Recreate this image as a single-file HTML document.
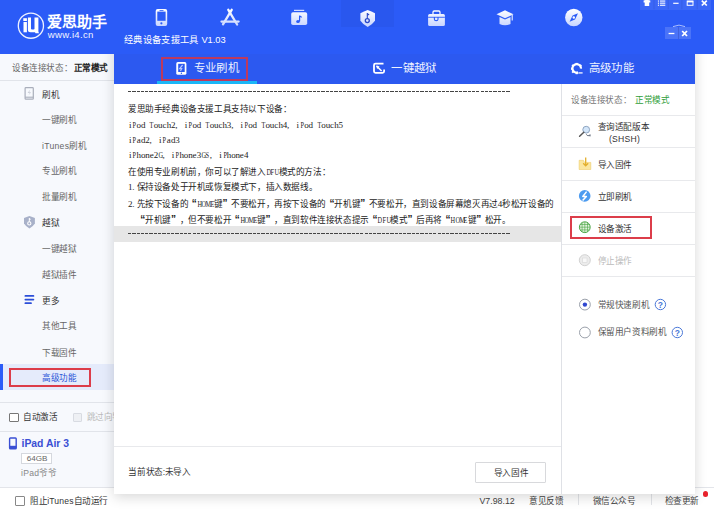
<!DOCTYPE html>
<html lang="zh-CN"><head><meta charset="utf-8">
<style>
*{margin:0;padding:0;box-sizing:border-box}
html,body{width:714px;height:510px;overflow:hidden;background:#fff}
body{position:relative;font-family:"Liberation Sans",sans-serif;color:#333}
.a{position:absolute}
.t{position:absolute;white-space:nowrap;line-height:1}
#hdr{left:0;top:0;width:714px;height:54px;background:#2b5bf7}
#side{left:0;top:54px;width:114px;height:433px;background:#f7f9fd}
#foot{left:0;top:487px;width:714px;height:23px;background:#fff;border-top:1px solid #e3e5ea}
#dlg{left:114px;top:27px;width:581px;height:467px;background:#fff;box-shadow:0 3px 12px rgba(0,0,0,.16);clip-path:inset(27px -20px -20px -20px)}
#dhdr{left:0;top:0;width:581px;height:57px;background:#2c59f0}
.si{font-size:8.6px;color:#666;letter-spacing:-.4px}
.rp{font-size:8.6px;color:#333;letter-spacing:-.4px}
.txt{font-family:"Liberation Mono",monospace;font-size:8.6px;letter-spacing:-.4px;color:#222}
.txt i{font-style:normal;display:inline-block;width:4.3px;text-align:center;letter-spacing:0;font-family:"Liberation Serif",serif;font-size:9px}
.txt i.p{text-align:left}
.txt i.u{font-size:8.8px;transform:scaleX(.72)}
.ql,.qr{font-size:10px;font-weight:bold;font-family:"Liberation Sans",sans-serif}
.ql{display:inline-block;width:8.6px;text-align:right;letter-spacing:0}
.qr{display:inline-block;width:8.6px;text-align:left;letter-spacing:0}
.dv{position:absolute;height:1px;background:#e8e9ec}
</style></head><body>
<div id="hdr" class="a">
  <svg class="a" style="left:0;top:0" width="50" height="45" viewBox="0 0 50 45">
    <circle cx="30.9" cy="25.65" r="12.6" fill="none" stroke="#eef2ff" stroke-width="1.3"/>
    <rect x="23.3" y="18.2" width="3.6" height="2.8" fill="#fff"/>
    <rect x="23.5" y="22" width="3.4" height="10.3" fill="#fff"/>
    <path d="M27.9 17.6 H31 V28.8 Q31 29.6 32 29.6 H33.6 Q34.5 29.6 34.5 28.8 V17.6 H38.4 V31.5 L39 33.3 H35.5 L35 32.3 H30.5 Q27.9 32.3 27.9 29.8 Z" fill="#fff"/>
  </svg>
  <div class="t" style="left:47px;top:14px;font-size:15px;font-weight:bold;color:#fff">爱思助手</div>
  <div class="t" style="left:47.8px;top:29.6px;font-size:9.6px;letter-spacing:.3px;color:#f2f5ff">www.i4.cn</div>
  <div class="a" style="left:341px;top:0;width:53px;height:27px;background:rgba(0,0,40,.045)"></div>
  <svg class="a" style="left:0;top:0" width="714" height="30" viewBox="0 0 714 30">
    <defs>
      <linearGradient id="ig" gradientUnits="userSpaceOnUse" x1="0" y1="9" x2="0" y2="26">
        <stop offset="0" stop-color="#fff"/><stop offset="1" stop-color="#c9d6ff"/>
      </linearGradient>
    </defs>
    <!-- phone -->
    <rect x="155.7" y="8.9" width="11.5" height="17.2" rx="2" fill="url(#ig)"/>
    <rect x="157.3" y="11.6" width="8.3" height="9.2" fill="#2b5cf8"/>
    <rect x="159.5" y="10" width="4" height="0.8" fill="#2b5cf8"/>
    <circle cx="161.4" cy="23.3" r="1.1" fill="#2b5cf8"/>
    <!-- app store A -->
    <g stroke="url(#ig)" stroke-width="2.3" stroke-linecap="round" fill="none">
      <path d="M228.3 9.8 L237.1 24.5"/>
      <path d="M231.7 9.8 L223 24.3"/>
      <path d="M221.5 21.6 H238.6"/>
    </g>
    <!-- music box -->
    <rect x="294" y="9.8" width="10.2" height="1.1" fill="#e6ecff"/>
    <rect x="291.2" y="12.2" width="16" height="12.8" rx="1.8" fill="url(#ig)"/>
    <path d="M299.6 15.8 V21.2" stroke="#2b5cf8" stroke-width="1.2"/>
    <path d="M299.4 15.6 Q301.5 15.8 302.2 17.6 L301 17.4 Q300.4 16.9 299.6 17" fill="#2b5cf8"/>
    <ellipse cx="298" cy="21.4" rx="1.8" ry="1.5" fill="#2b5cf8"/>
    <!-- shield key -->
    <path d="M367.7 10 Q371.5 11.2 375 13.2 V20.8 Q372 25 367.7 27 Q363.4 25 360.4 20.8 V13.2 Q364 11.2 367.7 10 Z" fill="url(#ig)"/>
    <circle cx="367.3" cy="20.6" r="2" fill="none" stroke="#2a48c8" stroke-width="1.3"/>
    <path d="M367.3 18.6 V13" stroke="#2a48c8" stroke-width="1.1"/>
    <path d="M367.3 13 L369.6 14.6 L367.3 16 Z" fill="#2a48c8"/>
    <!-- toolbox -->
    <path d="M433 14 V12.2 Q433 11 434.2 11 H438.8 Q440 11 440 12.2 V14" stroke="url(#ig)" stroke-width="1.3" fill="none"/>
    <rect x="428.1" y="14" width="16.8" height="12" rx="1.5" fill="url(#ig)"/>
    <rect x="428.1" y="16.8" width="16.8" height="0.9" fill="#2b5cf8"/>
    <path d="M434.4 17 V19.2 Q434.4 20.6 436.2 20.6 Q438 20.6 438 19.2 V17" stroke="#2b5cf8" stroke-width="1.1" fill="none"/>
    <!-- grad cap -->
    <path d="M505 10.3 L513.5 14.3 L505 18.3 L496.5 14.3 Z" fill="url(#ig)"/>
    <path d="M499.5 17 V24 Q505 26.5 510.5 24 V17 L505 19.6 Z" fill="url(#ig)"/>
    <path d="M512.2 15 V20.5" stroke="#e8eeff" stroke-width="1.1"/>
    <!-- compass -->
    <circle cx="573.8" cy="17.5" r="8.7" fill="url(#ig)"/>
    <path d="M578 13.3 L575 19.5 L569.6 21.7 L572.6 15.5 Z" fill="#2b5cf8"/>
    <circle cx="573.8" cy="17.5" r="1.2" fill="#fff"/>
  </svg>
  <!-- window buttons -->
  <div class="a" style="left:640.4px;top:0;width:71px;height:10px;background:rgba(255,255,255,.08)"></div>
  <svg class="a" style="left:636px;top:0" width="78" height="12" viewBox="636 0 78 12">
    <g stroke="rgba(0,0,60,.12)" stroke-width=".8"><path d="M654 0V9.3M668.2 0V9.3M681.9 0V9.3M697.2 0V9.3"/></g>
    <path d="M643.6 0.5 L645.6 0 H648.2 L650.3 0.5 V2.6 H649.2 V6 H644.7 V2.6 H643.6 Z" fill="#fff"/>
    <g fill="#fff"><rect x="657.9" y="0.5" width="1.1" height="1.1"/><rect x="657.9" y="2.6" width="1.1" height="1.1"/><rect x="657.9" y="4.7" width="1.1" height="1.1"/>
    <rect x="659.9" y="0.5" width="5.4" height="1.1"/><rect x="659.9" y="2.6" width="5.4" height="1.1"/><rect x="659.9" y="4.7" width="5.4" height="1.1"/></g>
    <path d="M673.2 3.3 H678.6" stroke="#fff" stroke-width="1.2"/>
    <rect x="687.2" y="1.1" width="5.8" height="4.2" fill="none" stroke="#fff" stroke-width="1"/>
    <path d="M687 1.6 H693.2" stroke="#fff" stroke-width="1.6"/>
    <path d="M701.8 0.6 L706.8 5.5 M706.8 0.6 L701.8 5.5" stroke="#fff" stroke-width="1.7"/>
  </svg>
</div>
<div id="side" class="a">
  <div class="t si" style="left:12px;top:9.7px;color:#666">设备连接状态：</div>
  <div class="t si" style="left:73.5px;top:9.7px;color:#222;font-weight:bold">正常模式</div>
</div>
<div class="dv" style="left:0;top:80px;width:114px;background:#e1e4ea"></div>
<svg class="a" style="left:0;top:80px" width="114" height="330" viewBox="0 80 114 330">
  <rect x="25.1" y="87.6" width="8.2" height="11.6" rx=".8" fill="none" stroke="#a9aebb" stroke-width="1.2"/>
  <path d="M25.1 97.2 H33.3" stroke="#a9aebb" stroke-width="1.1"/>
  <path d="M30.2 89.6 L27.6 93.1 H29.7 L28.4 95.4 L31.1 92.2 H29.2 Z" fill="#c9cdd7"/>
  <path d="M29.45 215.9 Q32.3 216.7 34.9 218.1 V223.6 Q32.7 227 29.45 228.5 Q26.2 227 24 223.6 V218.1 Q26.6 216.7 29.45 215.9 Z" fill="#a8b1c9"/>
  <circle cx="29.3" cy="223.4" r="1.6" fill="none" stroke="#fff" stroke-width="1.1"/>
  <path d="M29.3 221.8 V218" stroke="#fff" stroke-width="1"/>
  <path d="M29.3 218 L31 219.2 L29.3 220.2 Z" fill="#fff"/>
  <g stroke="#2b4ed8" stroke-width="1.8" stroke-linecap="round">
    <path d="M25.4 295.9 H33.4"/><path d="M25.4 299.6 H33.4"/><path d="M25.4 303.2 H31"/>
  </g>
</svg>
<div class="t si" style="left:42px;top:90.5px;color:#333">刷机</div>
<div class="t si" style="left:42px;top:116.4px">一键刷机</div>
<div class="t si" style="left:42px;top:142.0px"><span style="letter-spacing:.3px">iTunes</span>刷机</div>
<div class="t si" style="left:42px;top:167.0px">专业刷机</div>
<div class="t si" style="left:42px;top:192.6px">批量刷机</div>
<div class="t si" style="left:42px;top:219.4px;color:#333">越狱</div>
<div class="t si" style="left:42px;top:245.4px">一键越狱</div>
<div class="t si" style="left:42px;top:271.1px">越狱插件</div>
<div class="t si" style="left:42px;top:296.7px;color:#333">更多</div>
<div class="t si" style="left:42px;top:322.4px">其他工具</div>
<div class="t si" style="left:42px;top:348.7px">下载固件</div>
<div class="a" style="left:0;top:364px;width:114px;height:26px;background:#e5ebfb"></div>
<div class="a" style="left:0;top:364px;width:3px;height:26px;background:#2b5cf8"></div>
<div class="t si" style="left:42px;top:374.1px;color:#2b55d8">高级功能</div>
<div class="a" style="left:9px;top:367.6px;width:82px;height:19.4px;border:2.2px solid #dc3d4a"></div>
<div class="dv" style="left:0;top:401.5px;width:114px;background:#e1e4ea"></div>
<div class="a" style="left:9.3px;top:412.7px;width:9.6px;height:9.4px;border:1px solid #777;background:#fff;border-radius:1px"></div>
<div class="t si" style="left:23.3px;top:412.9px;color:#333">自动激活</div>
<div class="a" style="left:72.7px;top:412.7px;width:9.6px;height:9.4px;border:1px solid #d8dbe2;background:#eef0f4;border-radius:1px"></div>
<div class="t si" style="left:86.7px;top:412.9px;color:#bbb">跳过向导</div>
<div class="dv" style="left:0;top:430.5px;width:114px;background:#e1e4ea"></div>
<svg class="a" style="left:8px;top:436px" width="10" height="14" viewBox="0 0 10 14">
  <rect x="1.6" y="2" width="6.6" height="10.8" rx=".8" fill="none" stroke="#3a4fd4" stroke-width="1.4"/>
  <rect x="1.2" y="9.8" width="7.4" height="2.4" fill="#3a4fd4"/>
</svg>
<div class="t" style="left:21.5px;top:439.2px;font-size:10.4px;font-weight:bold;color:#3a4fd4">iPad Air 3</div>
<div class="a" style="left:21.1px;top:452.8px;width:31.3px;height:10.8px;border:1px solid #d5d8de;background:#fff"></div>
<div class="t" style="left:26.8px;top:454.6px;font-size:8.1px;color:#666">64GB</div>
<div class="t si" style="left:21px;top:469px;color:#888"><span style="letter-spacing:.3px">iPad</span>爷爷</div>
<div id="foot" class="a"></div>
<div class="a" style="left:15.3px;top:495.5px;width:9.6px;height:10px;border:1px solid #888;background:#fff;border-radius:1px"></div>
<div class="t si" style="left:30px;top:497.2px;color:#333">阻止<span style="letter-spacing:.15px">iTunes</span>自动运行</div>
<div class="t" style="left:479.5px;top:497px;font-size:8.8px;color:#444">V7.98.12</div>
<div class="t si" style="left:529px;top:497.2px;color:#444">意见反馈</div>
<div class="a" style="left:577.5px;top:494.3px;width:1px;height:10.5px;background:#e2e4e8"></div>
<div class="t si" style="left:592.7px;top:497.2px;color:#444">微信公众号</div>
<div class="a" style="left:650.8px;top:494.3px;width:1px;height:10.5px;background:#e2e4e8"></div>
<div class="t si" style="left:664.5px;top:497.2px;color:#444">检查更新</div>
<div class="a" style="left:702.6px;top:491.2px;width:5.6px;height:5.6px;border-radius:50%;background:#e8222c"></div>
<div id="dlg" class="a">
  <div id="dhdr" class="a"></div>
</div>
<div class="t" style="left:124px;top:35.5px;font-size:9.3px;letter-spacing:.35px;color:#fff">经典设备支援工具<span style="letter-spacing:0"> V1.03</span></div>
<div class="a" style="left:665px;top:27.3px;width:26px;height:12.2px;background:rgba(255,255,255,.15)"></div>
<div class="a" style="left:678px;top:27.3px;width:.8px;height:12.2px;background:rgba(0,0,60,.15)"></div>
<svg class="a" style="left:660px;top:22px" width="36" height="20" viewBox="660 22 36 20">
  <path d="M673 26.6 Q679 23.6 685 26.6" stroke="rgba(255,255,255,.6)" stroke-width="1" fill="none"/>
  <path d="M668.6 33.5 H674.4" stroke="#fff" stroke-width="1.3"/>
  <path d="M682.2 31 L687 36 M687 31 L682.2 36" stroke="#fff" stroke-width="1.8"/>
</svg>
<!-- tabs -->
<div class="a" style="left:156.7px;top:81px;width:100.3px;height:3px;background:#1ab6f7"></div>
<div class="a" style="left:160.6px;top:57.4px;width:87.8px;height:23.4px;border:2px solid #bd3a5e"></div>
<svg class="a" style="left:170px;top:58px" width="420" height="22" viewBox="170 58 420 22">
  <rect x="176.25" y="62.1" width="10.15" height="12.7" rx="1.6" fill="#fff"/>
  <rect x="178.2" y="63.8" width="6.5" height="8.2" fill="#2c59f0"/>
  <path d="M182.6 65 L179.7 68.6 H181.7 L180.5 71" stroke="#b9c8ff" stroke-width="1.2" fill="none"/>
  <circle cx="181.4" cy="73.3" r=".7" fill="#2c59f0"/>
  <path d="M383.5 63.6 H375.5 Q374 63.6 374 65.1 V71.3 Q374 72.8 375.5 72.8 H382.6 Q384.1 72.8 384.1 71.3 V69.6" stroke="#fff" stroke-width="1.8" fill="none"/>
  <path d="M376.6 66 L381.6 71" stroke="#fff" stroke-width="1.5"/>
  <path d="M376.2 65.6 L379.6 66.5 L377.1 69 Z" fill="#fff"/>
  <path d="M578.2 72.4 A4.3 4.3 0 1 1 581 68.6" stroke="#fff" stroke-width="2.2" fill="none"/>
  <g fill="#fff">
    <rect x="575.6" y="62.9" width="2.2" height="1.6"/>
    <rect x="579.8" y="64.6" width="1.8" height="1.8" transform="rotate(45 580.7 65.5)"/>
    <rect x="571.1" y="67.6" width="1.6" height="2.2"/>
    <rect x="571.9" y="64.6" width="1.8" height="1.8" transform="rotate(45 572.8 65.5)"/>
    <rect x="571.9" y="71" width="1.8" height="1.8" transform="rotate(45 572.8 71.9)"/>
    <rect x="575.6" y="72.6" width="2.2" height="1.6"/>
  </g>
  <path d="M578.6 72.9 H582.6" stroke="#dfe6ff" stroke-width="1.5"/>
</svg>
<div class="t" style="left:194px;top:63.2px;font-size:11.4px;letter-spacing:.17px;color:#eef2ff">专业刷机</div>
<div class="t" style="left:391.4px;top:63.2px;font-size:11.4px;letter-spacing:.17px;color:#eef2ff">一键越狱</div>
<div class="t" style="left:589px;top:63.2px;font-size:11.4px;letter-spacing:.17px;color:#eef2ff">高级功能</div>
<!-- right panel -->
<div class="a" style="left:561px;top:84px;width:1px;height:410px;background:#dfe1e6"></div>
<div class="t rp" style="left:571px;top:96.3px;color:#777">设备连接状态：</div>
<div class="t rp" style="left:635px;top:96.3px;color:#2f9e3a">正常模式</div>
<div class="dv" style="left:562px;top:115px;width:133px"></div>
<div class="t rp" style="left:597.6px;top:122.8px">查询适配版本</div>
<div class="t rp" style="left:609px;top:134.5px;letter-spacing:.25px">(SHSH)</div>
<div class="dv" style="left:562px;top:147px;width:133px"></div>
<div class="t rp" style="left:597.6px;top:160.5px">导入固件</div>
<div class="dv" style="left:562px;top:180px;width:133px"></div>
<div class="t rp" style="left:597.6px;top:193.3px">立即刷机</div>
<div class="dv" style="left:562px;top:212px;width:133px"></div>
<div class="t rp" style="left:597.6px;top:225px">设备激活</div>
<div class="a" style="left:570.2px;top:215.8px;width:81.4px;height:23.3px;border:2px solid #dc3d4a"></div>
<div class="dv" style="left:562px;top:244px;width:133px"></div>
<div class="t rp" style="left:597.6px;top:257.1px;color:#bbb">停止操作</div>
<div class="dv" style="left:562px;top:276px;width:133px"></div>
<div class="t rp" style="left:597.6px;top:300.5px;color:#555">常规快速刷机</div>
<div class="t rp" style="left:597.6px;top:328.3px;color:#555">保留用户资料刷机</div>
<svg class="a" style="left:570px;top:118px" width="120" height="225" viewBox="570 118 120 225">
  <circle cx="586.2" cy="129.7" r="3.4" fill="#d3e6fa" stroke="#8fa5c0" stroke-width="1"/>
  <path d="M583.8 132.3 L579.6 136.2" stroke="#555" stroke-width="1.5" stroke-linecap="round"/>
  <path d="M586.2 134.2 L588 136.2 M587.5 135.5 H590.3 M590 134.2 V136.5" stroke="#6b7483" stroke-width=".9" fill="none"/>
  <path d="M579.1 160.3 H583.4 L584.6 162.4 H590.8 V169.5 H579.1 Z" fill="#fbe6a0" stroke="#ecc65c" stroke-width=".5"/>
  <path d="M585.7 157.5 V165.6 M583.2 163.3 L585.7 165.8 L588.2 163.3" stroke="#e3ae2c" stroke-width="1.3" fill="none"/>
  <circle cx="584.7" cy="195.9" r="5.8" fill="#4d9cf0"/>
  <path d="M586.6 191.6 L582.8 196.5 H586.4 L582.6 200.4" stroke="#fff" stroke-width="1.5" fill="none" stroke-linejoin="round"/>
  <circle cx="584.8" cy="227.2" r="5.4" fill="#e2f3dc" stroke="#4aa544" stroke-width="1"/>
  <path d="M579.6 227.2 H590 M584.8 222 V232.4 M580.4 224.5 H589.2 M580.4 229.9 H589.2 M582.1 222.6 V231.8 M587.5 222.6 V231.8" stroke="#4aa544" stroke-width=".6"/>
  <circle cx="584.8" cy="260.2" r="5.5" fill="#ececec" stroke="#d2d2d2" stroke-width="1"/>
  <rect x="582.6" y="258" width="4.4" height="4.4" fill="#f8f8f8" stroke="#d8d8d8" stroke-width=".6"/>
  <circle cx="584.9" cy="304.6" r="5.4" fill="#fff" stroke="#9aa0aa" stroke-width="1"/>
  <circle cx="584.9" cy="304.6" r="2.2" fill="#3048d0"/>
  <circle cx="584.9" cy="332.5" r="5.4" fill="#fff" stroke="#9aa0aa" stroke-width="1"/>
  <circle cx="660.4" cy="304.5" r="5.2" fill="#fff" stroke="#4a78d8" stroke-width="1"/>
  <text x="660.4" y="307.8" text-anchor="middle" font-family="Liberation Sans" font-size="8.5" font-weight="bold" fill="#4a78d8">?</text>
  <circle cx="677.3" cy="332.5" r="5.2" fill="#fff" stroke="#4a78d8" stroke-width="1"/>
  <text x="677.3" y="335.8" text-anchor="middle" font-family="Liberation Sans" font-size="8.5" font-weight="bold" fill="#4a78d8">?</text>
</svg>
<!-- text area -->
<div class="a" style="left:114px;top:226.2px;width:447px;height:15.4px;background:#e6e6e6"></div>
<div class="a" style="left:128px;top:91px;width:382.5px;height:1px;background:repeating-linear-gradient(90deg,#444 0 3.2px,transparent 3.2px 4.3px)"></div>
<div class="txt t" style="left:128px;top:105.7px">爱思助手经典设备支援工具支持以下设备：</div>
<div class="txt t" style="left:128px;top:120.5px"><i>i</i><i class="u">P</i><i>o</i><i>d</i><i>&nbsp;</i><i class="u">T</i><i>o</i><i>u</i><i>c</i><i>h</i><i>2</i><i class="p">,</i><i>&nbsp;</i><i>i</i><i class="u">P</i><i>o</i><i>d</i><i>&nbsp;</i><i class="u">T</i><i>o</i><i>u</i><i>c</i><i>h</i><i>3</i><i class="p">,</i><i>&nbsp;</i><i>i</i><i class="u">P</i><i>o</i><i>d</i><i>&nbsp;</i><i class="u">T</i><i>o</i><i>u</i><i>c</i><i>h</i><i>4</i><i class="p">,</i><i>&nbsp;</i><i>i</i><i class="u">P</i><i>o</i><i>d</i><i>&nbsp;</i><i class="u">T</i><i>o</i><i>u</i><i>c</i><i>h</i><i>5</i></div>
<div class="txt t" style="left:128px;top:136.4px"><i>i</i><i class="u">P</i><i>a</i><i>d</i><i>2</i><i class="p">,</i><i>&nbsp;</i><i>i</i><i class="u">P</i><i>a</i><i>d</i><i>3</i></div>
<div class="txt t" style="left:128px;top:151.0px"><i>i</i><i class="u">P</i><i>h</i><i>o</i><i>n</i><i>e</i><i>2</i><i class="u">G</i><i class="p">,</i><i>&nbsp;</i><i>i</i><i class="u">P</i><i>h</i><i>o</i><i>n</i><i>e</i><i>3</i><i class="u">G</i><i class="u">S</i><i class="p">,</i><i>&nbsp;</i><i>i</i><i class="u">P</i><i>h</i><i>o</i><i>n</i><i>e</i><i>4</i></div>
<div class="txt t" style="left:128px;top:167.8px">在使用专业刷机前，你可以了解进入<i class="u">D</i><i class="u">F</i><i class="u">U</i>模式的方法：</div>
<div class="txt t" style="left:128px;top:182.6px"><i>1</i><i class="p">.</i>保持设备处于开机或恢复模式下，插入数据线。</div>
<div class="txt t" style="left:128px;top:199.1px"><i>2</i><i class="p">.</i>先按下设备的<span class="ql">“</span><i class="u">H</i><i class="u">O</i><i class="u">M</i><i class="u">E</i>键<span class="qr">”</span>不要松开，再按下设备的<span class="ql">“</span>开机键<span class="qr">”</span>不要松开，直到设备屏幕熄灭再过<i>4</i>秒松开设备的</div>
<div class="txt t" style="left:128px;top:215.1px"><i>&nbsp;</i><i>&nbsp;</i><span class="ql">“</span>开机键<span class="qr">”</span>，但不要松开<span class="ql">“</span><i class="u">H</i><i class="u">O</i><i class="u">M</i><i class="u">E</i>键<span class="qr">”</span>，直到软件连接状态提示<span class="ql">“</span><i class="u">D</i><i class="u">F</i><i class="u">U</i>模式<span class="qr">”</span>后再将<span class="ql">“</span><i class="u">H</i><i class="u">O</i><i class="u">M</i><i class="u">E</i>键<span class="qr">”</span>松开。</div>
<div class="a" style="left:128px;top:233px;width:382.5px;height:1px;background:repeating-linear-gradient(90deg,#444 0 3.2px,transparent 3.2px 4.3px)"></div>
<!-- dialog footer -->
<div class="dv" style="left:114px;top:446px;width:447px"></div>
<div class="t rp" style="left:128.4px;top:468px">当前状态:未导入</div>
<div class="a" style="left:475.3px;top:462.2px;width:71.2px;height:21.2px;border:1px solid #d8d9dc;background:#fff;border-radius:1px"></div>
<div class="t rp" style="left:493.8px;top:469px">导入固件</div>
</body></html>
